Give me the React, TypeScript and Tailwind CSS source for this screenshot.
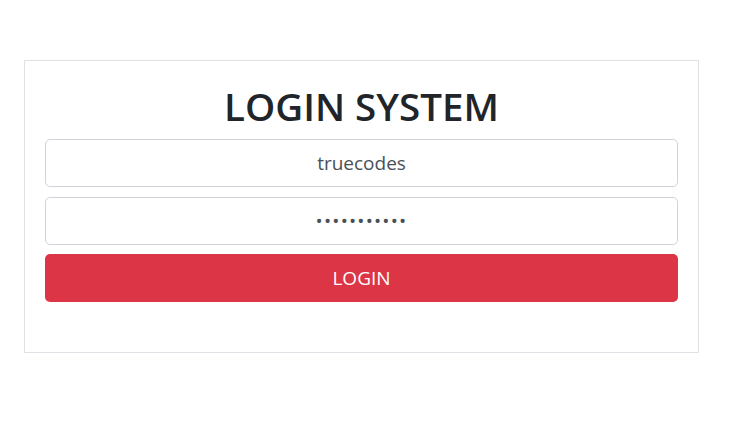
export default function App() {
  return (
    <div className="min-h-[443px] w-[740px] bg-white pt-[60px] pl-[24px] font-['Open_Sans',sans-serif]">
      <div className="w-[675px] border border-[#dee2e6] px-[20px] pt-[20px] pb-[50px]">
        <h1 className="mb-[10px] h-[48px] text-center text-[38.5px] leading-[50px] font-semibold text-[#212529]">
          LOGIN SYSTEM
        </h1>
        <form className="flex flex-col">
          <input
            type="text"
            defaultValue="truecodes"
            className="mb-[10px] h-[48px] w-full rounded-[5px] border border-[#ced4da] bg-white px-4 text-center text-[19px] text-[#495057] outline-none"
          />
          <input
            type="password"
            defaultValue="truecodes12"
            className="mb-[9px] h-[48px] w-full rounded-[5px] border border-[#ced4da] bg-white px-4 text-center text-[19px] tracking-[1.2px] text-[#495057] outline-none"
          />
          <button
            type="button"
            className="h-[48px] w-full rounded-[5px] bg-[#dc3545] text-[19px] text-white"
          >
            LOGIN
          </button>
        </form>
      </div>
    </div>
  );
}
